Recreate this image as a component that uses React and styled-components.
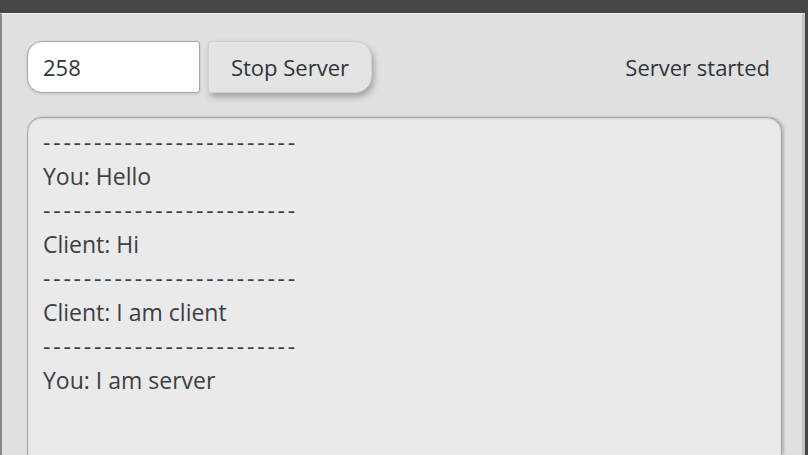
import React, { useState } from "react";
import styled, { createGlobalStyle } from "styled-components";

const GlobalStyle = createGlobalStyle`
  html, body {
    margin: 0;
    padding: 0;
    background: #e0e0e0;
    overflow: hidden;
  }
  * {
    box-sizing: border-box;
  }
`;

const Frame = styled.div`
  width: 808px;
  height: 455px;
  display: flex;
  flex-direction: column;
  background: #484644;
  font-family: "Open Sans", "Noto Sans", sans-serif;
  color: #3b4046;
`;

const TitleBar = styled.div`
  height: 13px;
  flex-shrink: 0;
  background: #484644;
`;

const Window = styled.div`
  flex: 1;
  display: flex;
  flex-direction: column;
  gap: 24px;
  margin-right: 3px;
  padding: 27px 20px 0 25px;
  background: #e0e0e0;
  border-left: 2px solid #8a8a8a;
  border-right: 3px solid #c4c4c4;
  border-top: 1px solid #f0f0f0;
  min-height: 0;
`;

const Toolbar = styled.div`
  display: flex;
  align-items: center;
  gap: 8px;
  height: 52px;
  padding-right: 12px;
`;

const PortInput = styled.input`
  width: 173px;
  height: 52px;
  padding: 0 15px;
  border: 1px solid #a8a8a8;
  border-radius: 15px 3px 3px 15px;
  background: #ffffff;
  font: inherit;
  font-size: 22px;
  color: #30353c;
  outline: none;
  box-shadow: 0 1px 3px rgba(0, 0, 0, 0.15);
`;

const ActionButton = styled.button`
  width: 164px;
  height: 52px;
  border: 1px solid #d0d0d0;
  border-radius: 3px 17px 17px 3px;
  background: #e4e4e4;
  font: inherit;
  font-size: 22px;
  color: #30353c;
  cursor: pointer;
  box-shadow: 2px 4px 6px rgba(0, 0, 0, 0.28);
`;

const Status = styled.span`
  margin-left: auto;
  font-size: 22px;
  color: #30353c;
`;

const Log = styled.div`
  flex: 1;
  min-height: 0;
  padding: 7px 15px;
  background: #eaeaea;
  border: 1px solid #a6a6a6;
  border-bottom: none;
  border-radius: 15px 15px 0 0;
  box-shadow: inset 0 1px 2px rgba(0, 0, 0, 0.12), 2px 0 3px rgba(0, 0, 0, 0.2);
  overflow: hidden;
`;

const Line = styled.div`
  height: 34px;
  line-height: 34px;
  font-size: 23px;
  color: #3b4046;
  letter-spacing: ${(p) => (p.$rule ? "2.8px" : "normal")};
  white-space: pre;
`;

const messages = [
  { from: "You", text: "Hello" },
  { from: "Client", text: "Hi" },
  { from: "Client", text: "I am client" },
  { from: "You", text: "I am server" },
];

const rule = "-".repeat(25);

export default function App() {
  const [port, setPort] = useState("258");

  return (
    <>
      <GlobalStyle />
      <Frame>
        <TitleBar />
        <Window>
          <Toolbar>
            <PortInput value={port} onChange={(e) => setPort(e.target.value)} />
            <ActionButton>Stop Server</ActionButton>
            <Status>Server started</Status>
          </Toolbar>
          <Log>
            {messages.map((m, i) => (
              <React.Fragment key={i}>
                <Line $rule>{rule}</Line>
                <Line>
                  {m.from}: {m.text}
                </Line>
              </React.Fragment>
            ))}
          </Log>
        </Window>
      </Frame>
    </>
  );
}
